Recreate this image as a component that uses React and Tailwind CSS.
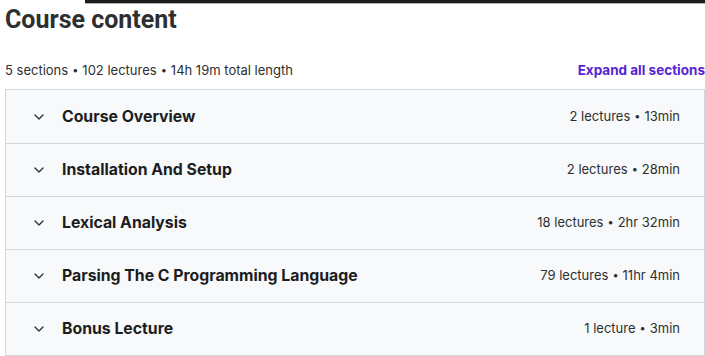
import { ChevronDown } from 'lucide-react'

const sections = [
  { title: 'Course Overview', meta: ['2 lectures', '13min'] },
  { title: 'Installation And Setup', meta: ['2 lectures', '28min'] },
  { title: 'Lexical Analysis', meta: ['18 lectures', '2hr 32min'] },
  { title: 'Parsing The C Programming Language', meta: ['79 lectures', '11hr 4min'] },
  { title: 'Bonus Lecture', meta: ['1 lecture', '3min'] },
]

function Dot() {
  return <span className="inline-block mx-[4px] text-[11px] align-[1px]">•</span>
}

export default function App() {
  return (
    <div className="w-[705px] h-[356px] overflow-hidden bg-white text-[#2d2f31]" style={{ fontFamily: 'Inter, "Noto Sans", sans-serif' }}>
      <div className="ml-[85px] h-[4px] bg-[#1c1d1f] border-b border-[#b0b0b0]" />
      <h2 className="pl-[5px] mt-[2px] text-[25px] leading-[28px] font-bold" style={{ fontFamily: 'Roboto, sans-serif' }}>Course content</h2>
      <div className="flex items-end justify-between pl-[5px] mt-[24px] h-[22px]">
        <span className="text-[13px] leading-[20px]">
          5 sections<Dot />102 lectures<Dot />14h 19m total length
        </span>
        <button className="text-[13.5px] leading-[20px] font-bold text-[#5624d0]">Expand all sections</button>
      </div>
      <div className="ml-[5px] mt-[9px] w-[700px] border border-[#d1d7dc]">
        {sections.map((s, i) => (
          <div key={s.title} className={`flex items-center justify-between h-[53px] bg-[#f7f9fa] pl-[25px] pr-[24px] ${i > 0 ? 'border-t border-[#d1d7dc]' : ''}`}>
            <div className="flex items-center gap-[15px]">
              <ChevronDown className="w-[16px] h-[16px] text-[#2d2f31]" strokeWidth={2} />
              <span className="text-[15.8px] font-bold text-[#1c1d1f]">{s.title}</span>
            </div>
            <span className="text-[13px]">
              {s.meta[0]}<Dot />{s.meta[1]}
            </span>
          </div>
        ))}
      </div>
    </div>
  )
}
